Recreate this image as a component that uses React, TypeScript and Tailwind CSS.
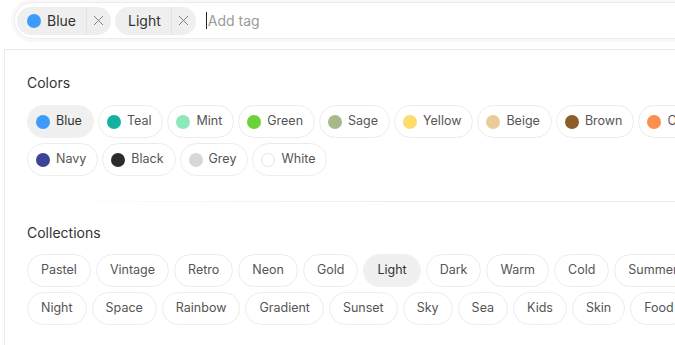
import React from "react";
import { X } from "lucide-react";

type ColorTag = { name: string; hex: string; selected?: boolean; outline?: boolean };

const colorRows: ColorTag[][] = [
  [
    { name: "Blue", hex: "#3d9cfb", selected: true },
    { name: "Teal", hex: "#14b1a1" },
    { name: "Mint", hex: "#8ce9bb" },
    { name: "Green", hex: "#6cd23a" },
    { name: "Sage", hex: "#a6b98a" },
    { name: "Yellow", hex: "#fddc6a" },
    { name: "Beige", hex: "#e9cc97" },
    { name: "Brown", hex: "#8d5d2a" },
    { name: "Orange", hex: "#fa8f4f" },
  ],
  [
    { name: "Navy", hex: "#3b4496" },
    { name: "Black", hex: "#2c2c2c" },
    { name: "Grey", hex: "#d7d7d7" },
    { name: "White", hex: "#ffffff", outline: true },
  ],
];

const collectionRows: { name: string; selected?: boolean }[][] = [
  [
    { name: "Pastel" },
    { name: "Vintage" },
    { name: "Retro" },
    { name: "Neon" },
    { name: "Gold" },
    { name: "Light", selected: true },
    { name: "Dark" },
    { name: "Warm" },
    { name: "Cold" },
    { name: "Summer" },
  ],
  [
    { name: "Night" },
    { name: "Space" },
    { name: "Rainbow" },
    { name: "Gradient" },
    { name: "Sunset" },
    { name: "Sky" },
    { name: "Sea" },
    { name: "Kids" },
    { name: "Skin" },
    { name: "Food" },
  ],
];

const SelectedTag = ({ label, dot }: { label: string; dot?: string }) => (
  <div className="flex h-[28px] shrink-0 items-center rounded-full bg-[#efefef] text-[14px] text-[#333]">
    <div className={`flex items-center gap-[6px] pr-[10px] ${dot ? "pl-[10px]" : "pl-[13px]"}`}>
      {dot && <span className="h-[14px] w-[14px] rounded-full" style={{ backgroundColor: dot }} />}
      <span>{label}</span>
    </div>
    <div className="flex h-full items-center border-l border-[#e2e2e2] pl-[3px] pr-[4px]">
      <X size={17} strokeWidth={1.3} className="text-[#777]" />
    </div>
  </div>
);

export default function App() {
  return (
    <div className="h-[345px] w-[675px] overflow-hidden bg-white font-['Inter',sans-serif]">
      <div className="pl-[14px] pt-[2px]">
        <div className="flex h-[37px] w-[760px] items-center gap-1 rounded-full border border-[#ebebeb] pl-[2px] shadow-[0_0_0_3px_#f8f8f8]">
          <SelectedTag label="Blue" dot="#3d9cfb" />
          <SelectedTag label="Light" />
          <div className="ml-[6px] flex items-center">
            <span className="h-[17px] w-px bg-[#222]" />
            <span className="ml-px text-[14px] text-[#9a9a9a]">Add tag</span>
          </div>
        </div>
      </div>

      <div className="ml-[4px] mt-[10px] h-[400px] w-[800px] border-l border-t border-[#ebebeb] px-[22px] pt-[23px]">
        <h3 className="text-[14px] leading-[20px] text-[#333]">Colors</h3>
        <div className="mt-[12px] flex flex-col gap-[5px]">
          {colorRows.map((row, i) => (
            <div key={i} className="flex gap-1">
              {row.map((c) => (
                <div
                  key={c.name}
                  className={`flex h-[33px] shrink-0 items-center gap-1.5 rounded-full border pl-2 pr-[11px] text-[12.5px] ${
                    c.selected ? "border-[#f0f0f0] bg-[#f0f0f0] text-[#333]" : "border-[#ececec] text-[#555]"
                  }`}
                >
                  <span
                    className={`h-[14px] w-[14px] rounded-full ${c.outline ? "border border-[#e4e4e4]" : ""}`}
                    style={{ backgroundColor: c.hex }}
                  />
                  <span>{c.name}</span>
                </div>
              ))}
            </div>
          ))}
        </div>

        <div className="mt-[25px] h-px bg-gradient-to-r from-transparent via-[#ececec] to-[#ececec]" />

        <h3 className="mt-[21px] text-[14px] leading-[20px] text-[#333]">Collections</h3>
        <div className="mt-[11px] flex flex-col gap-[5px]">
          {collectionRows.map((row, i) => (
            <div key={i} className="flex gap-[5px]">
              {row.map((c) => (
                <div
                  key={c.name}
                  className={`flex h-[33px] shrink-0 items-center rounded-full border px-[13px] text-[12.5px] ${
                    c.selected ? "border-[#f0f0f0] bg-[#f0f0f0] text-[#333]" : "border-[#ececec] text-[#555]"
                  }`}
                >
                  {c.name}
                </div>
              ))}
            </div>
          ))}
        </div>
      </div>
    </div>
  );
}
